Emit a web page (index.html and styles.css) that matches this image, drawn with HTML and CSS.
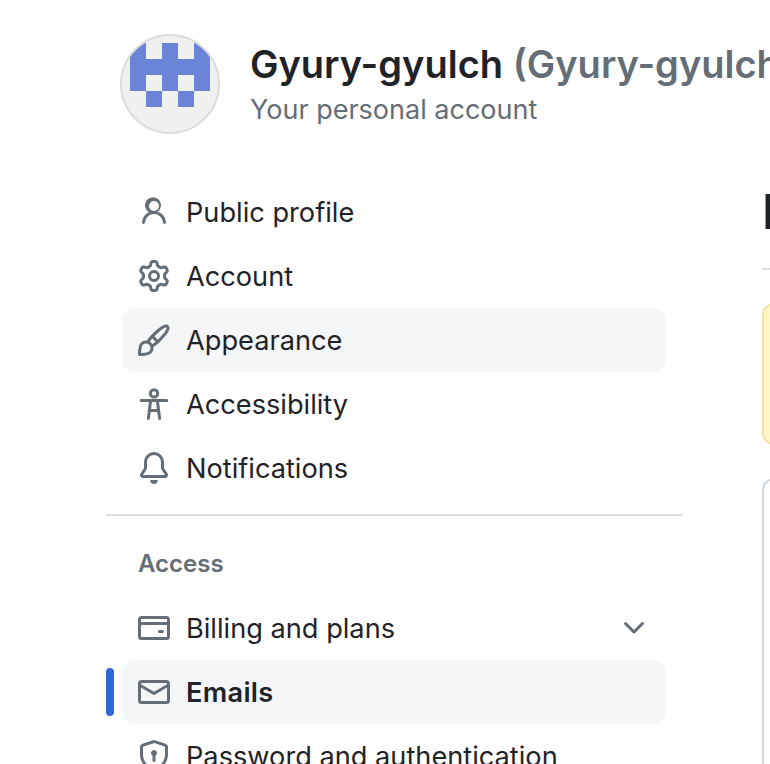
FILE: index.html
```html
<!DOCTYPE html>
<html lang="en">
<head>
  <meta charset="UTF-8">
  <title>Emails</title>
  <meta name="viewport" content="width=device-width, initial-scale=1.0">
  <link rel="stylesheet" href="styles.css">
</head>
<body>
  <div class="page">
    <header class="account-header">
      <div class="avatar">
        <svg viewBox="0 0 96 96" width="96" height="96" aria-hidden="true">
          <path fill="#6a84d8" d="M8 7h16v16H8zM40 7h16v16H40zM72 7h16v16H72zM8 23h80v16H8zM8 39h16v16H8zM40 39h16v16H40zM72 39h16v16H72zM24 55h16v16H24zM56 55h16v16H56z"/>
        </svg>
      </div>
      <div class="account-text">
        <h1 class="account-name">Gyury-gyulch <span class="account-login">(Gyury-gyulch)</span></h1>
        <div class="account-sub">Your personal account</div>
      </div>
    </header>

    <div class="layout">
      <nav class="sidebar">
        <a class="nav-item">
          <svg class="icon" viewBox="0 0 16 16"><path d="M10.561 8.073a6.005 6.005 0 0 1 3.432 5.142.75.75 0 1 1-1.498.07 4.5 4.5 0 0 0-8.99 0 .75.75 0 0 1-1.498-.07 6.004 6.004 0 0 1 3.431-5.142 3.999 3.999 0 1 1 4.123 0ZM10.5 5a2.5 2.5 0 1 0-5 0 2.5 2.5 0 0 0 5 0Z"/></svg>
          Public profile
        </a>
        <a class="nav-item">
          <svg class="icon" viewBox="0 0 16 16"><path d="M8 0a8.2 8.2 0 0 1 .701.031C9.444.095 9.99.645 10.16 1.29l.288 1.107c.018.066.079.158.212.224.231.114.454.243.668.386.123.082.233.09.299.071l1.103-.303c.644-.176 1.392.021 1.82.63.27.385.506.792.704 1.218.315.675.111 1.422-.364 1.891l-.814.806c-.049.048-.098.147-.088.294.016.257.016.515 0 .772-.01.147.038.246.088.294l.814.806c.475.469.679 1.216.364 1.891a7.977 7.977 0 0 1-.704 1.217c-.428.61-1.176.807-1.82.63l-1.102-.302c-.067-.019-.177-.011-.3.071a5.909 5.909 0 0 1-.668.386c-.133.066-.194.158-.211.224l-.29 1.106c-.168.646-.715 1.196-1.458 1.26a8.006 8.006 0 0 1-1.402 0c-.743-.064-1.289-.614-1.458-1.26l-.289-1.106c-.018-.066-.079-.158-.212-.224a5.738 5.738 0 0 1-.668-.386c-.123-.082-.233-.09-.299-.071l-1.103.303c-.644.176-1.392-.021-1.82-.63a8.12 8.12 0 0 1-.704-1.218c-.315-.675-.111-1.422.363-1.891l.815-.806c.05-.048.098-.147.088-.294a6.214 6.214 0 0 1 0-.772c.01-.147-.038-.246-.088-.294l-.815-.806C.635 6.045.431 5.298.746 4.623a7.92 7.92 0 0 1 .704-1.217c.428-.61 1.176-.807 1.82-.63l1.102.302c.067.019.177.011.3-.071.214-.143.437-.272.668-.386.133-.066.194-.158.211-.224l.29-1.106C6.009.645 6.556.095 7.299.03 7.53.01 7.764 0 8 0Zm-.571 1.525c-.036.003-.108.036-.137.146l-.289 1.105c-.147.561-.549.967-.998 1.189-.173.086-.34.183-.5.29-.417.278-.97.423-1.529.27l-1.103-.303c-.109-.03-.175.016-.195.045-.22.312-.412.644-.573.99-.014.031-.021.11.059.19l.815.806c.411.406.562.957.53 1.456a4.709 4.709 0 0 0 0 .582c.032.499-.119 1.05-.53 1.456l-.815.806c-.081.08-.073.159-.059.19.162.346.353.677.573.989.02.03.085.076.195.046l1.102-.303c.56-.153 1.113-.008 1.53.27.161.107.328.204.501.29.447.222.85.629.997 1.189l.289 1.105c.029.109.101.143.137.146a6.6 6.6 0 0 0 1.142 0c.036-.003.108-.036.137-.146l.289-1.105c.147-.561.549-.967.998-1.189.173-.086.34-.183.5-.29.417-.278.97-.423 1.529-.27l1.103.303c.109.029.175-.016.195-.045.22-.313.411-.644.573-.99.014-.031.021-.11-.059-.19l-.815-.806c-.411-.406-.562-.957-.53-1.456a4.709 4.709 0 0 0 0-.582c-.032-.499.119-1.05.53-1.456l.815-.806c.081-.08.073-.159.059-.19a6.464 6.464 0 0 0-.573-.989c-.02-.03-.085-.076-.195-.046l-1.102.303c-.56.153-1.113.008-1.53-.27a4.44 4.44 0 0 0-.501-.29c-.447-.222-.85-.629-.997-1.189l-.289-1.105c-.029-.11-.101-.143-.137-.146a6.6 6.6 0 0 0-1.142 0ZM11 8a3 3 0 1 1-6 0 3 3 0 0 1 6 0ZM9.5 8a1.5 1.5 0 1 0-3.001.001A1.5 1.5 0 0 0 9.5 8Z"/></svg>
          Account
        </a>
        <a class="nav-item hovered">
          <svg class="icon" viewBox="0 0 16 16"><path d="M11.134 1.535c.7-.509 1.416-.942 2.076-1.155.649-.21 1.463-.267 2.069.34.603.601.568 1.411.368 2.07-.202.668-.624 1.39-1.125 2.096-1.011 1.424-2.496 2.987-3.775 4.249-1.098 1.084-2.132 1.839-3.04 2.3a3.744 3.744 0 0 1-1.055 3.217c-.431.431-1.065.691-1.657.861-.614.177-1.294.287-1.914.357A21.151 21.151 0 0 1 .797 16H.743l.007-.75H.749L.742 16a.75.75 0 0 1-.743-.742l.743-.008-.742.007v-.054a21.25 21.25 0 0 1 .13-2.284c.067-.647.187-1.287.358-1.914.17-.591.43-1.226.86-1.657a3.746 3.746 0 0 1 3.227-1.054c.466-.893 1.225-1.907 2.314-2.982 1.271-1.255 2.833-2.75 4.245-3.777ZM1.62 13.089c-.051.464-.086.929-.104 1.395.466-.018.932-.053 1.396-.104a10.511 10.511 0 0 0 1.668-.309c.526-.151.856-.325 1.011-.48a2.25 2.25 0 1 0-3.182-3.182c-.155.155-.329.485-.48 1.01a10.515 10.515 0 0 0-.309 1.67Zm10.396-10.34c-1.224.89-2.605 2.189-3.822 3.384l1.718 1.718c1.21-1.205 2.51-2.597 3.387-3.833.47-.662.78-1.227.912-1.662.134-.444.032-.551.009-.575h-.001V1.78c-.014-.014-.113-.113-.548.027-.432.14-.995.462-1.655.942Zm-4.832 7.266-.001.001a9.859 9.859 0 0 0 1.63-1.142L7.155 7.216a9.7 9.7 0 0 0-1.161 1.607c.482.302.889.71 1.19 1.192Z"/></svg>
          Appearance
        </a>
        <a class="nav-item">
          <svg class="icon icon-line" viewBox="0 0 16 16"><circle cx="8" cy="2.7" r="1.85"/><path d="M1.6 6.3h12.8M6.3 6.3 5.2 15.2M9.7 6.3l1.1 8.9M5.7 11.2h4.6"/></svg>
          Accessibility
        </a>
        <a class="nav-item">
          <svg class="icon" viewBox="0 0 16 16"><path d="M8 16c.9 0 1.7-.6 1.9-1.5.1-.3-.1-.5-.4-.5h-3c-.3 0-.5.2-.4.5.2.9 1 1.5 1.9 1.5ZM3 5a5 5 0 0 1 10 0v2.947c0 .05.015.098.042.139l1.703 2.555A1.519 1.519 0 0 1 13.482 13H2.518a1.516 1.516 0 0 1-1.263-2.36l1.703-2.554A.255.255 0 0 0 3 7.947Zm5-3.5A3.5 3.5 0 0 0 4.5 5v2.947c0 .346-.102.683-.294.97l-1.703 2.556a.017.017 0 0 0-.003.01l.001.006c0 .002.002.004.004.006l.006.004.007.001h10.964l.007-.001.006-.004.004-.006.001-.007a.017.017 0 0 0-.003-.01l-1.703-2.554a1.745 1.745 0 0 1-.294-.97V5A3.5 3.5 0 0 0 8 1.5Z"/></svg>
          Notifications
        </a>

        <hr class="nav-divider">
        <div class="nav-heading">Access</div>

        <a class="nav-item">
          <svg class="icon" viewBox="0 0 16 16"><path d="M10.75 9a.75.75 0 0 0 0 1.5h1.5a.75.75 0 0 0 0-1.5h-1.5Z"/><path d="M0 3.75C0 2.784.784 2 1.75 2h12.5c.966 0 1.75.784 1.75 1.75v8.5A1.75 1.75 0 0 1 14.25 14H1.75A1.75 1.75 0 0 1 0 12.25ZM14.5 6.5h-13v5.75c0 .138.112.25.25.25h12.5a.25.25 0 0 0 .25-.25Zm0-2.75a.25.25 0 0 0-.25-.25H1.75a.25.25 0 0 0-.25.25V5h13Z"/></svg>
          Billing and plans
          <svg class="icon chevron" viewBox="0 0 16 16"><path d="M12.78 5.22a.749.749 0 0 1 0 1.06l-4.25 4.25a.749.749 0 0 1-1.06 0L3.22 6.28a.749.749 0 1 1 1.06-1.06L8 8.939l3.72-3.719a.749.749 0 0 1 1.06 0Z"/></svg>
        </a>
        <a class="nav-item active">
          <svg class="icon" viewBox="0 0 16 16"><path d="M1.75 2h12.5c.966 0 1.75.784 1.75 1.75v8.5A1.75 1.75 0 0 1 14.25 14H1.75A1.75 1.75 0 0 1 0 12.25v-8.5C0 2.784.784 2 1.75 2ZM1.5 12.251c0 .138.112.25.25.25h12.5a.25.25 0 0 0 .25-.25V5.809L8.38 9.397a.75.75 0 0 1-.76 0L1.5 5.809v6.442Zm13-8.181v-.32a.25.25 0 0 0-.25-.25H1.75a.25.25 0 0 0-.25.25v.32L8 7.88Z"/></svg>
          Emails
        </a>
        <a class="nav-item">
          <svg class="icon" viewBox="0 0 16 16"><path d="m8.533.133 5.25 1.68A1.75 1.75 0 0 1 15 3.48V7c0 1.566-.32 3.182-1.303 4.682-.983 1.498-2.585 2.813-5.032 3.855a1.697 1.697 0 0 1-1.33 0c-2.447-1.042-4.049-2.357-5.032-3.855C1.32 10.182 1 8.566 1 7V3.48a1.75 1.75 0 0 1 1.217-1.667l5.25-1.68a1.748 1.748 0 0 1 1.066 0Zm-.61 1.429.001.001-5.25 1.68a.251.251 0 0 0-.174.237V7c0 1.36.275 2.666 1.057 3.859.784 1.194 2.121 2.342 4.366 3.298a.196.196 0 0 0 .154 0c2.245-.957 3.582-2.103 4.366-3.297C13.225 9.666 13.5 8.358 13.5 7V3.48a.25.25 0 0 0-.174-.238l-5.25-1.68a.25.25 0 0 0-.153 0ZM9.5 6.5c0 .536-.286 1.032-.75 1.3v2.45a.75.75 0 0 1-1.5 0V7.8A1.5 1.5 0 1 1 9.5 6.5Z"/></svg>
          Password and authentication
        </a>
      </nav>

      <main class="content">
        <h2 class="content-title">Emails</h2>
        <div class="flash"></div>
        <div class="email-box"></div>
      </main>
    </div>
  </div>
</body>
</html>
```

FILE: styles.css
```css
html, body {
  height: 100%;
  margin: 0;
  overflow: hidden;
}
body {
  background: #fff;
  color: #1f2328;
  font-family: Inter, 'Noto Sans', 'Liberation Sans', sans-serif;
}
.page {
  width: 1400px;
  height: 764px;
  overflow: hidden;
  padding: 34px 0 0 106px;
  box-sizing: border-box;
}
.account-header {
  display: flex;
  align-items: center;
  gap: 30px;
  margin: 0 0 46px 14px;
  height: 100px;
}
.avatar {
  width: 100px;
  height: 100px;
  box-sizing: border-box;
  border: 2px solid #dcdcdc;
  border-radius: 50%;
  background: #f0f0f0;
  overflow: hidden;
  flex: none;
}
.avatar svg {
  display: block;
}
.account-name {
  margin: 0;
  font-size: 38px;
  line-height: 48px;
  font-weight: 600;
  white-space: nowrap;
}
.account-login {
  color: #656d76;
}
.account-sub {
  margin-top: 3px;
  font-size: 27px;
  line-height: 38px;
  color: #656d76;
}
.layout {
  display: flex;
  gap: 80px;
}
.sidebar {
  width: 576px;
  flex: none;
}
.nav-item {
  display: flex;
  align-items: center;
  gap: 16px;
  position: relative;
  height: 64px;
  margin: 0 16px;
  padding: 0 16px;
  border-radius: 12px;
  font-size: 27.2px;
  white-space: nowrap;
}
.nav-item.hovered, .nav-item.active {
  background: #f5f6f8;
}
.nav-item.active {
  font-weight: 600;
  letter-spacing: 0.3px;
}
.nav-item.active::after {
  content: "";
  position: absolute;
  left: -16px;
  top: 8px;
  width: 8px;
  height: 48px;
  border-radius: 4px;
  background: #2f69d9;
}
.icon {
  width: 32px;
  height: 32px;
  flex: none;
  fill: #656d76;
}
.icon-line {
  fill: none;
  stroke: #656d76;
  stroke-width: 1.5;
  stroke-linecap: round;
}
.chevron {
  margin-left: auto;
}
.nav-divider {
  height: 2px;
  margin: 14px 0 16px;
  border: 0;
  background: #d8dee4;
}
.nav-heading {
  height: 64px;
  line-height: 64px;
  padding-left: 32px;
  font-size: 24px;
  font-weight: 600;
  color: #656d76;
}
.content {
  width: 800px;
  flex: none;
}
.content-title {
  margin: 0;
  height: 88px;
  line-height: 64px;
  font-size: 48px;
  font-weight: 600;
  border-bottom: 2px solid #d8dee4;
}
.flash {
  height: 142px;
  box-sizing: border-box;
  margin-top: 33px;
  background: #fff8c5;
  border: 2px solid #f2e3a3;
  border-radius: 12px;
}
.email-box {
  height: 300px;
  margin-top: 33px;
  border: 2px solid #d0d7de;
  border-radius: 12px;
}
```
